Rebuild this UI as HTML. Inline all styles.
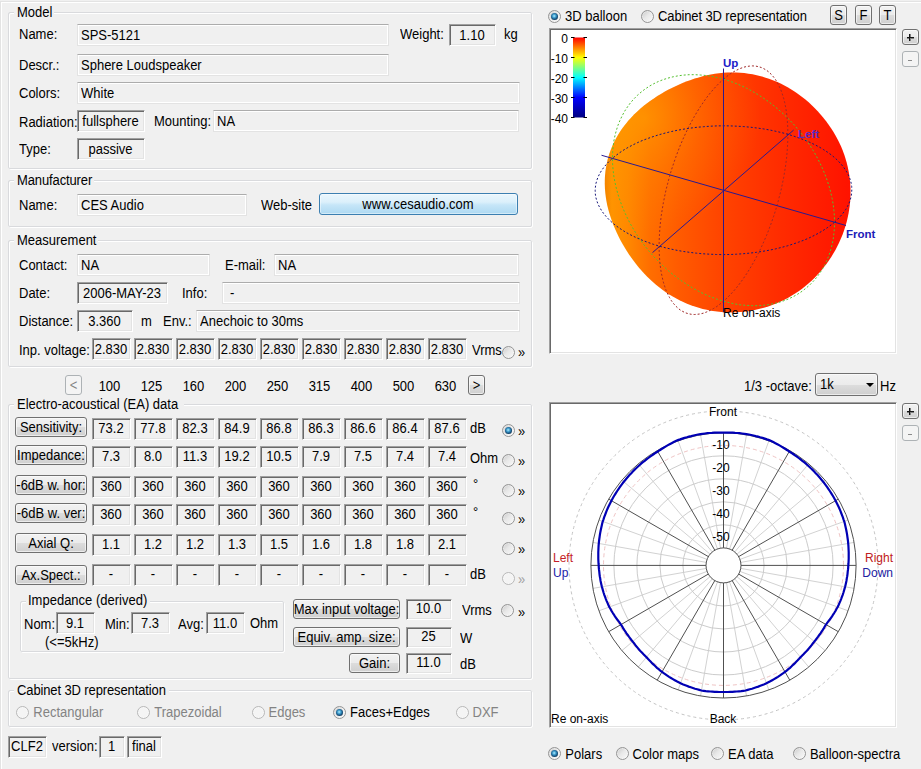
<!DOCTYPE html>
<html><head><meta charset="utf-8"><style>
*{margin:0;padding:0;box-sizing:content-box}
html,body{width:921px;height:769px;overflow:hidden;background:#f0f0f0}
body{position:relative;font-family:'Liberation Sans', sans-serif;font-size:13px}
div{position:absolute}
.t{white-space:nowrap;line-height:16px;transform:scaleY(1.1);transform-origin:0 12px}
.gbw{border:1px solid #fff;border-radius:2px}
.gbg{border:1px solid #d9dadd;border-radius:2px}
.gbl{background:#f0f0f0}
.fl{border-top:1px solid #acacac;border-left:1px solid #e3e3e3;border-right:1px solid #e3e3e3;border-bottom:1px solid #e3e3e3;box-shadow:inset 1px 1px 0 #fff,inset -1px -1px 0 #fff;background:#f0f0f0}
.sk{border-top:1px solid #a0a0a0;border-left:1px solid #a0a0a0;border-right:1px solid #fff;border-bottom:1px solid #fff;box-shadow:inset 1px 1px 0 #696969,inset -1px -1px 0 #e3e3e3;padding:1px;background:#f0f0f0;width:0;height:0}
.btn{border:1px solid #707070;border-radius:3px;background:linear-gradient(#f2f2f2 0%,#ebebeb 50%,#dddddd 50%,#cfcfcf 100%);box-shadow:inset 0 0 0 1px rgba(255,255,255,.6)}
.btn.dis{border-color:#adb2b5;background:#f4f4f4;box-shadow:none}
.rd{width:11px;height:11px;border:1px solid #959595;border-radius:50%;background:linear-gradient(135deg,#c8c8c8 0%,#e8e8e8 45%,#fafafa 100%);box-shadow:inset 0 0 0 1px rgba(255,255,255,.35)}
.rd.rdis{border-color:#b8b8b8;background:#f4f4f4}
.dot{left:2px;top:2px;width:7px;height:7px;border-radius:50%;background:radial-gradient(circle 4.8px at 3.2px 3px,#b8eefc 0,#4aa8d6 1.5px,#1c5f8e 3px,#0b3050 4.2px,#0a2a44 4.8px)}

.web{border:1px solid #3c7fb1;border-radius:3px;background:linear-gradient(#eaf6fd 0%,#dcf0fb 40%,#c6e6f8 55%,#aed9f2 100%);box-shadow:inset 0 0 0 1px rgba(255,255,255,.45)}
.pb{border-top:1px solid #a0a0a0;border-left:1px solid #a0a0a0;border-right:1px solid #fff;border-bottom:1px solid #fff;box-shadow:inset 1px 1px 0 #696969,inset -1px -1px 0 #e3e3e3;background:#fff;padding:1px}
</style></head>
<body>
<div style="left:0;top:1px;width:921px;height:0;border-top:1px solid #e3e3e3"></div>
<div style="left:1px;top:2px;width:920px;height:0;border-top:1px solid #fff"></div>
<div style="left:0;top:1px;width:0;height:768px;border-left:1px solid #e3e3e3"></div>
<div style="left:1px;top:2px;width:0;height:767px;border-left:1px solid #fff"></div>
<div class="gbw" style="left:9px;top:13px;width:522px;height:155px"></div>
<div class="gbg" style="left:8px;top:12px;width:522px;height:155px"></div>
<div class="gbl" style="left:14px;top:4px;width:40px;height:16px"></div>
<div class="t" style="left:17px;top:5px;font-size:13px;color:#000;">Model</div>
<div class="t" style="left:19px;top:27px;font-size:13px;color:#000;">Name:</div>
<div class="fl" style="left:77px;top:24px;width:310px;height:20px"></div>
<div class="t" style="left:81px;top:28px;font-size:13px;color:#000;">SPS-5121</div>
<div class="t" style="left:400px;top:27px;font-size:13px;color:#000;">Weight:</div>
<div class="sk" style="left:449px;top:24px;width:43px;height:18px"></div>
<div class="t" style="left:372.0px;width:200px;text-align:center;top:28px;font-size:13px;color:#000;">1.10</div>
<div class="t" style="left:504px;top:27px;font-size:13px;color:#000;">kg</div>
<div class="t" style="left:19px;top:58px;font-size:13px;color:#000;">Descr.:</div>
<div class="fl" style="left:77px;top:54px;width:310px;height:20px"></div>
<div class="t" style="left:81px;top:58px;font-size:13px;color:#000;">Sphere Loudspeaker</div>
<div class="t" style="left:19px;top:86px;font-size:13px;color:#000;">Colors:</div>
<div class="fl" style="left:77px;top:82px;width:441px;height:20px"></div>
<div class="t" style="left:81px;top:86px;font-size:13px;color:#000;">White</div>
<div class="t" style="left:19px;top:115px;font-size:13px;color:#000;">Radiation:</div>
<div class="sk" style="left:77px;top:110px;width:64px;height:18px"></div>
<div class="t" style="left:10.5px;width:200px;text-align:center;top:114px;font-size:13px;color:#000;">fullsphere</div>
<div class="t" style="left:154px;top:114px;font-size:13px;color:#000;">Mounting:</div>
<div class="fl" style="left:213px;top:110px;width:304px;height:20px"></div>
<div class="t" style="left:217px;top:114px;font-size:13px;color:#000;">NA</div>
<div class="t" style="left:19px;top:142px;font-size:13px;color:#000;">Type:</div>
<div class="sk" style="left:77px;top:138px;width:64px;height:18px"></div>
<div class="t" style="left:10.5px;width:200px;text-align:center;top:142px;font-size:13px;color:#000;">passive</div>
<div class="gbw" style="left:9px;top:181px;width:522px;height:45px"></div>
<div class="gbg" style="left:8px;top:180px;width:522px;height:45px"></div>
<div class="gbl" style="left:14px;top:172px;width:80px;height:16px"></div>
<div class="t" style="left:17px;top:173px;font-size:13px;color:#000;letter-spacing:-0.12px">Manufacturer</div>
<div class="t" style="left:19px;top:198px;font-size:13px;color:#000;">Name:</div>
<div class="fl" style="left:77px;top:194px;width:168px;height:20px"></div>
<div class="t" style="left:81px;top:198px;font-size:13px;color:#000;">CES Audio</div>
<div class="t" style="left:261px;top:198px;font-size:13px;color:#000;">Web-site</div>
<div class="web" style="left:319px;top:193px;width:197px;height:20px"></div>
<div class="t" style="left:318px;width:200px;text-align:center;top:197px;font-size:13px;color:#000;">www.cesaudio.com</div>
<div class="gbw" style="left:9px;top:241px;width:522px;height:125px"></div>
<div class="gbg" style="left:8px;top:240px;width:522px;height:125px"></div>
<div class="gbl" style="left:14px;top:232px;width:84px;height:16px"></div>
<div class="t" style="left:17px;top:233px;font-size:13px;color:#000;">Measurement</div>
<div class="t" style="left:19px;top:258px;font-size:13px;color:#000;">Contact:</div>
<div class="fl" style="left:77px;top:254px;width:131px;height:20px"></div>
<div class="t" style="left:81px;top:258px;font-size:13px;color:#000;">NA</div>
<div class="t" style="left:225px;top:258px;font-size:13px;color:#000;">E-mail:</div>
<div class="fl" style="left:274px;top:254px;width:243px;height:20px"></div>
<div class="t" style="left:278px;top:258px;font-size:13px;color:#000;">NA</div>
<div class="t" style="left:19px;top:286px;font-size:13px;color:#000;">Date:</div>
<div class="sk" style="left:77px;top:282px;width:87px;height:18px"></div>
<div class="t" style="left:22.0px;width:200px;text-align:center;top:286px;font-size:13px;color:#000;">2006-MAY-23</div>
<div class="t" style="left:182px;top:286px;font-size:13px;color:#000;">Info:</div>
<div class="fl" style="left:222px;top:282px;width:296px;height:20px"></div>
<div class="t" style="left:230px;top:286px;font-size:13px;color:#000;">-</div>
<div class="t" style="left:19px;top:314px;font-size:13px;color:#000;">Distance:</div>
<div class="sk" style="left:77px;top:310px;width:52px;height:18px"></div>
<div class="t" style="left:4.5px;width:200px;text-align:center;top:314px;font-size:13px;color:#000;">3.360</div>
<div class="t" style="left:141px;top:314px;font-size:13px;color:#000;">m</div>
<div class="t" style="left:163px;top:314px;font-size:13px;color:#000;">Env.:</div>
<div class="fl" style="left:196px;top:310px;width:322px;height:20px"></div>
<div class="t" style="left:200px;top:314px;font-size:13px;color:#000;">Anechoic to 30ms</div>
<div class="t" style="left:19px;top:343px;font-size:13px;color:#000;">Inp. voltage:</div>
<div class="sk" style="left:92px;top:338px;width:35px;height:18px"></div>
<div class="t" style="left:11.0px;width:200px;text-align:center;top:342px;font-size:13px;color:#000;">2.830</div>
<div class="sk" style="left:134px;top:338px;width:35px;height:18px"></div>
<div class="t" style="left:53.0px;width:200px;text-align:center;top:342px;font-size:13px;color:#000;">2.830</div>
<div class="sk" style="left:176px;top:338px;width:35px;height:18px"></div>
<div class="t" style="left:95.0px;width:200px;text-align:center;top:342px;font-size:13px;color:#000;">2.830</div>
<div class="sk" style="left:218px;top:338px;width:35px;height:18px"></div>
<div class="t" style="left:137.0px;width:200px;text-align:center;top:342px;font-size:13px;color:#000;">2.830</div>
<div class="sk" style="left:260px;top:338px;width:35px;height:18px"></div>
<div class="t" style="left:179.0px;width:200px;text-align:center;top:342px;font-size:13px;color:#000;">2.830</div>
<div class="sk" style="left:302px;top:338px;width:35px;height:18px"></div>
<div class="t" style="left:221.0px;width:200px;text-align:center;top:342px;font-size:13px;color:#000;">2.830</div>
<div class="sk" style="left:344px;top:338px;width:35px;height:18px"></div>
<div class="t" style="left:263.0px;width:200px;text-align:center;top:342px;font-size:13px;color:#000;">2.830</div>
<div class="sk" style="left:386px;top:338px;width:35px;height:18px"></div>
<div class="t" style="left:305.0px;width:200px;text-align:center;top:342px;font-size:13px;color:#000;">2.830</div>
<div class="sk" style="left:428px;top:338px;width:35px;height:18px"></div>
<div class="t" style="left:347.0px;width:200px;text-align:center;top:342px;font-size:13px;color:#000;">2.830</div>
<div class="t" style="left:472px;top:343px;font-size:13px;color:#000;">Vrms</div>
<div class="rd" style="left:501.5px;top:345.5px"></div>
<div class="t" style="left:518px;top:345px;font-size:13px;color:#000;">»</div>
<div class="btn dis" style="left:65px;top:375px;width:15px;height:18px"></div>
<div class="t" style="left:-26.5px;width:200px;text-align:center;top:378px;font-size:13px;color:#838383;">&lt;</div>
<div class="t" style="left:9.5px;width:200px;text-align:center;top:379px;font-size:13px;color:#000;">100</div>
<div class="t" style="left:51.5px;width:200px;text-align:center;top:379px;font-size:13px;color:#000;">125</div>
<div class="t" style="left:93.5px;width:200px;text-align:center;top:379px;font-size:13px;color:#000;">160</div>
<div class="t" style="left:135.5px;width:200px;text-align:center;top:379px;font-size:13px;color:#000;">200</div>
<div class="t" style="left:177.5px;width:200px;text-align:center;top:379px;font-size:13px;color:#000;">250</div>
<div class="t" style="left:219.5px;width:200px;text-align:center;top:379px;font-size:13px;color:#000;">315</div>
<div class="t" style="left:261.5px;width:200px;text-align:center;top:379px;font-size:13px;color:#000;">400</div>
<div class="t" style="left:303.5px;width:200px;text-align:center;top:379px;font-size:13px;color:#000;">500</div>
<div class="t" style="left:345.5px;width:200px;text-align:center;top:379px;font-size:13px;color:#000;">630</div>
<div class="btn" style="left:468px;top:375px;width:15px;height:18px"></div>
<div class="t" style="left:376.5px;width:200px;text-align:center;top:378px;font-size:13px;color:#000;">&gt;</div>
<div class="gbw" style="left:9px;top:405px;width:522px;height:273px"></div>
<div class="gbg" style="left:8px;top:404px;width:522px;height:273px"></div>
<div class="gbl" style="left:14px;top:396px;width:170px;height:16px"></div>
<div class="t" style="left:17px;top:397px;font-size:13px;color:#000;">Electro-acoustical (EA) data</div>
<div class="btn" style="left:15px;top:417px;width:70px;height:18px"></div>
<div class="t" style="left:-49.0px;width:200px;text-align:center;top:420px;font-size:13px;color:#000;">Sensitivity:</div>
<div class="sk" style="left:92px;top:418px;width:35px;height:18px"></div>
<div class="t" style="left:11.0px;width:200px;text-align:center;top:421px;font-size:13px;color:#000;">73.2</div>
<div class="sk" style="left:134px;top:418px;width:35px;height:18px"></div>
<div class="t" style="left:53.0px;width:200px;text-align:center;top:421px;font-size:13px;color:#000;">77.8</div>
<div class="sk" style="left:176px;top:418px;width:35px;height:18px"></div>
<div class="t" style="left:95.0px;width:200px;text-align:center;top:421px;font-size:13px;color:#000;">82.3</div>
<div class="sk" style="left:218px;top:418px;width:35px;height:18px"></div>
<div class="t" style="left:137.0px;width:200px;text-align:center;top:421px;font-size:13px;color:#000;">84.9</div>
<div class="sk" style="left:260px;top:418px;width:35px;height:18px"></div>
<div class="t" style="left:179.0px;width:200px;text-align:center;top:421px;font-size:13px;color:#000;">86.8</div>
<div class="sk" style="left:302px;top:418px;width:35px;height:18px"></div>
<div class="t" style="left:221.0px;width:200px;text-align:center;top:421px;font-size:13px;color:#000;">86.3</div>
<div class="sk" style="left:344px;top:418px;width:35px;height:18px"></div>
<div class="t" style="left:263.0px;width:200px;text-align:center;top:421px;font-size:13px;color:#000;">86.6</div>
<div class="sk" style="left:386px;top:418px;width:35px;height:18px"></div>
<div class="t" style="left:305.0px;width:200px;text-align:center;top:421px;font-size:13px;color:#000;">86.4</div>
<div class="sk" style="left:428px;top:418px;width:35px;height:18px"></div>
<div class="t" style="left:347.0px;width:200px;text-align:center;top:421px;font-size:13px;color:#000;">87.6</div>
<div class="t" style="left:470px;top:421px;font-size:13px;color:#000;">dB</div>
<div class="rd" style="left:501.5px;top:423.75px"><div class="dot"></div></div>
<div class="t" style="left:518px;top:424px;font-size:13px;color:#000;">»</div>
<div class="btn" style="left:15px;top:445px;width:70px;height:18px"></div>
<div class="t" style="left:-49.0px;width:200px;text-align:center;top:448px;font-size:13px;color:#000;">Impedance:</div>
<div class="sk" style="left:92px;top:446px;width:35px;height:18px"></div>
<div class="t" style="left:11.0px;width:200px;text-align:center;top:449px;font-size:13px;color:#000;">7.3</div>
<div class="sk" style="left:134px;top:446px;width:35px;height:18px"></div>
<div class="t" style="left:53.0px;width:200px;text-align:center;top:449px;font-size:13px;color:#000;">8.0</div>
<div class="sk" style="left:176px;top:446px;width:35px;height:18px"></div>
<div class="t" style="left:95.0px;width:200px;text-align:center;top:449px;font-size:13px;color:#000;">11.3</div>
<div class="sk" style="left:218px;top:446px;width:35px;height:18px"></div>
<div class="t" style="left:137.0px;width:200px;text-align:center;top:449px;font-size:13px;color:#000;">19.2</div>
<div class="sk" style="left:260px;top:446px;width:35px;height:18px"></div>
<div class="t" style="left:179.0px;width:200px;text-align:center;top:449px;font-size:13px;color:#000;">10.5</div>
<div class="sk" style="left:302px;top:446px;width:35px;height:18px"></div>
<div class="t" style="left:221.0px;width:200px;text-align:center;top:449px;font-size:13px;color:#000;">7.9</div>
<div class="sk" style="left:344px;top:446px;width:35px;height:18px"></div>
<div class="t" style="left:263.0px;width:200px;text-align:center;top:449px;font-size:13px;color:#000;">7.5</div>
<div class="sk" style="left:386px;top:446px;width:35px;height:18px"></div>
<div class="t" style="left:305.0px;width:200px;text-align:center;top:449px;font-size:13px;color:#000;">7.4</div>
<div class="sk" style="left:428px;top:446px;width:35px;height:18px"></div>
<div class="t" style="left:347.0px;width:200px;text-align:center;top:449px;font-size:13px;color:#000;">7.4</div>
<div class="t" style="left:470px;top:451px;font-size:13px;color:#000;">Ohm</div>
<div class="rd" style="left:501.5px;top:453.75px"></div>
<div class="t" style="left:518px;top:454px;font-size:13px;color:#000;">»</div>
<div class="btn" style="left:15px;top:475px;width:70px;height:18px"></div>
<div class="t" style="left:-49.0px;width:200px;text-align:center;top:478px;font-size:13px;color:#000;">-6dB w. hor:</div>
<div class="sk" style="left:92px;top:476px;width:35px;height:18px"></div>
<div class="t" style="left:11.0px;width:200px;text-align:center;top:479px;font-size:13px;color:#000;">360</div>
<div class="sk" style="left:134px;top:476px;width:35px;height:18px"></div>
<div class="t" style="left:53.0px;width:200px;text-align:center;top:479px;font-size:13px;color:#000;">360</div>
<div class="sk" style="left:176px;top:476px;width:35px;height:18px"></div>
<div class="t" style="left:95.0px;width:200px;text-align:center;top:479px;font-size:13px;color:#000;">360</div>
<div class="sk" style="left:218px;top:476px;width:35px;height:18px"></div>
<div class="t" style="left:137.0px;width:200px;text-align:center;top:479px;font-size:13px;color:#000;">360</div>
<div class="sk" style="left:260px;top:476px;width:35px;height:18px"></div>
<div class="t" style="left:179.0px;width:200px;text-align:center;top:479px;font-size:13px;color:#000;">360</div>
<div class="sk" style="left:302px;top:476px;width:35px;height:18px"></div>
<div class="t" style="left:221.0px;width:200px;text-align:center;top:479px;font-size:13px;color:#000;">360</div>
<div class="sk" style="left:344px;top:476px;width:35px;height:18px"></div>
<div class="t" style="left:263.0px;width:200px;text-align:center;top:479px;font-size:13px;color:#000;">360</div>
<div class="sk" style="left:386px;top:476px;width:35px;height:18px"></div>
<div class="t" style="left:305.0px;width:200px;text-align:center;top:479px;font-size:13px;color:#000;">360</div>
<div class="sk" style="left:428px;top:476px;width:35px;height:18px"></div>
<div class="t" style="left:347.0px;width:200px;text-align:center;top:479px;font-size:13px;color:#000;">360</div>
<div class="t" style="left:473px;top:477px;font-size:13px;color:#000;">°</div>
<div class="rd" style="left:501.5px;top:483.75px"></div>
<div class="t" style="left:518px;top:484px;font-size:13px;color:#000;">»</div>
<div class="btn" style="left:15px;top:503px;width:70px;height:18px"></div>
<div class="t" style="left:-49.0px;width:200px;text-align:center;top:506px;font-size:13px;color:#000;">-6dB w. ver:</div>
<div class="sk" style="left:92px;top:504px;width:35px;height:18px"></div>
<div class="t" style="left:11.0px;width:200px;text-align:center;top:507px;font-size:13px;color:#000;">360</div>
<div class="sk" style="left:134px;top:504px;width:35px;height:18px"></div>
<div class="t" style="left:53.0px;width:200px;text-align:center;top:507px;font-size:13px;color:#000;">360</div>
<div class="sk" style="left:176px;top:504px;width:35px;height:18px"></div>
<div class="t" style="left:95.0px;width:200px;text-align:center;top:507px;font-size:13px;color:#000;">360</div>
<div class="sk" style="left:218px;top:504px;width:35px;height:18px"></div>
<div class="t" style="left:137.0px;width:200px;text-align:center;top:507px;font-size:13px;color:#000;">360</div>
<div class="sk" style="left:260px;top:504px;width:35px;height:18px"></div>
<div class="t" style="left:179.0px;width:200px;text-align:center;top:507px;font-size:13px;color:#000;">360</div>
<div class="sk" style="left:302px;top:504px;width:35px;height:18px"></div>
<div class="t" style="left:221.0px;width:200px;text-align:center;top:507px;font-size:13px;color:#000;">360</div>
<div class="sk" style="left:344px;top:504px;width:35px;height:18px"></div>
<div class="t" style="left:263.0px;width:200px;text-align:center;top:507px;font-size:13px;color:#000;">360</div>
<div class="sk" style="left:386px;top:504px;width:35px;height:18px"></div>
<div class="t" style="left:305.0px;width:200px;text-align:center;top:507px;font-size:13px;color:#000;">360</div>
<div class="sk" style="left:428px;top:504px;width:35px;height:18px"></div>
<div class="t" style="left:347.0px;width:200px;text-align:center;top:507px;font-size:13px;color:#000;">360</div>
<div class="t" style="left:473px;top:505px;font-size:13px;color:#000;">°</div>
<div class="rd" style="left:501.5px;top:511.75px"></div>
<div class="t" style="left:518px;top:512px;font-size:13px;color:#000;">»</div>
<div class="btn" style="left:15px;top:533px;width:70px;height:18px"></div>
<div class="t" style="left:-49.0px;width:200px;text-align:center;top:536px;font-size:13px;color:#000;">Axial Q:</div>
<div class="sk" style="left:92px;top:534px;width:35px;height:18px"></div>
<div class="t" style="left:11.0px;width:200px;text-align:center;top:537px;font-size:13px;color:#000;">1.1</div>
<div class="sk" style="left:134px;top:534px;width:35px;height:18px"></div>
<div class="t" style="left:53.0px;width:200px;text-align:center;top:537px;font-size:13px;color:#000;">1.2</div>
<div class="sk" style="left:176px;top:534px;width:35px;height:18px"></div>
<div class="t" style="left:95.0px;width:200px;text-align:center;top:537px;font-size:13px;color:#000;">1.2</div>
<div class="sk" style="left:218px;top:534px;width:35px;height:18px"></div>
<div class="t" style="left:137.0px;width:200px;text-align:center;top:537px;font-size:13px;color:#000;">1.3</div>
<div class="sk" style="left:260px;top:534px;width:35px;height:18px"></div>
<div class="t" style="left:179.0px;width:200px;text-align:center;top:537px;font-size:13px;color:#000;">1.5</div>
<div class="sk" style="left:302px;top:534px;width:35px;height:18px"></div>
<div class="t" style="left:221.0px;width:200px;text-align:center;top:537px;font-size:13px;color:#000;">1.6</div>
<div class="sk" style="left:344px;top:534px;width:35px;height:18px"></div>
<div class="t" style="left:263.0px;width:200px;text-align:center;top:537px;font-size:13px;color:#000;">1.8</div>
<div class="sk" style="left:386px;top:534px;width:35px;height:18px"></div>
<div class="t" style="left:305.0px;width:200px;text-align:center;top:537px;font-size:13px;color:#000;">1.8</div>
<div class="sk" style="left:428px;top:534px;width:35px;height:18px"></div>
<div class="t" style="left:347.0px;width:200px;text-align:center;top:537px;font-size:13px;color:#000;">2.1</div>
<div class="rd" style="left:501.5px;top:541.75px"></div>
<div class="t" style="left:518px;top:542px;font-size:13px;color:#000;">»</div>
<div class="btn" style="left:15px;top:565px;width:70px;height:18px"></div>
<div class="t" style="left:-49.0px;width:200px;text-align:center;top:568px;font-size:13px;color:#000;">Ax.Spect.:</div>
<div class="sk" style="left:92px;top:564px;width:35px;height:18px"></div>
<div class="t" style="left:11.0px;width:200px;text-align:center;top:567px;font-size:13px;color:#000;">-</div>
<div class="sk" style="left:134px;top:564px;width:35px;height:18px"></div>
<div class="t" style="left:53.0px;width:200px;text-align:center;top:567px;font-size:13px;color:#000;">-</div>
<div class="sk" style="left:176px;top:564px;width:35px;height:18px"></div>
<div class="t" style="left:95.0px;width:200px;text-align:center;top:567px;font-size:13px;color:#000;">-</div>
<div class="sk" style="left:218px;top:564px;width:35px;height:18px"></div>
<div class="t" style="left:137.0px;width:200px;text-align:center;top:567px;font-size:13px;color:#000;">-</div>
<div class="sk" style="left:260px;top:564px;width:35px;height:18px"></div>
<div class="t" style="left:179.0px;width:200px;text-align:center;top:567px;font-size:13px;color:#000;">-</div>
<div class="sk" style="left:302px;top:564px;width:35px;height:18px"></div>
<div class="t" style="left:221.0px;width:200px;text-align:center;top:567px;font-size:13px;color:#000;">-</div>
<div class="sk" style="left:344px;top:564px;width:35px;height:18px"></div>
<div class="t" style="left:263.0px;width:200px;text-align:center;top:567px;font-size:13px;color:#000;">-</div>
<div class="sk" style="left:386px;top:564px;width:35px;height:18px"></div>
<div class="t" style="left:305.0px;width:200px;text-align:center;top:567px;font-size:13px;color:#000;">-</div>
<div class="sk" style="left:428px;top:564px;width:35px;height:18px"></div>
<div class="t" style="left:347.0px;width:200px;text-align:center;top:567px;font-size:13px;color:#000;">-</div>
<div class="t" style="left:470px;top:567px;font-size:13px;color:#000;">dB</div>
<div class="rd rdis" style="left:501.5px;top:571.75px"></div>
<div class="t" style="left:518px;top:572px;font-size:13px;color:#a0a0a0;">»</div>
<div class="gbw" style="left:21px;top:602px;width:262px;height:49px"></div>
<div class="gbg" style="left:20px;top:601px;width:262px;height:49px"></div>
<div class="gbl" style="left:26px;top:593px;width:124px;height:16px"></div>
<div class="t" style="left:28px;top:593px;font-size:13px;color:#000;">Impedance (derived)</div>
<div class="t" style="left:24px;top:617px;font-size:13px;color:#000;">Nom:</div>
<div class="sk" style="left:56px;top:612px;width:35px;height:18px"></div>
<div class="t" style="left:-25.0px;width:200px;text-align:center;top:616px;font-size:13px;color:#000;">9.1</div>
<div class="t" style="left:45px;top:635px;font-size:13px;color:#000;">(&lt;=5kHz)</div>
<div class="t" style="left:105px;top:617px;font-size:13px;color:#000;">Min:</div>
<div class="sk" style="left:131px;top:612px;width:35px;height:18px"></div>
<div class="t" style="left:50.0px;width:200px;text-align:center;top:616px;font-size:13px;color:#000;">7.3</div>
<div class="t" style="left:178px;top:617px;font-size:13px;color:#000;">Avg:</div>
<div class="sk" style="left:206px;top:612px;width:35px;height:18px"></div>
<div class="t" style="left:125.0px;width:200px;text-align:center;top:616px;font-size:13px;color:#000;">11.0</div>
<div class="t" style="left:250px;top:616px;font-size:13px;color:#000;">Ohm</div>
<div class="btn" style="left:293px;top:599px;width:105px;height:18px"></div>
<div class="t" style="left:246.5px;width:200px;text-align:center;top:602px;font-size:13px;color:#000;">Max input voltage:</div>
<div class="sk" style="left:406px;top:599px;width:42px;height:17px"></div>
<div class="t" style="left:328.5px;width:200px;text-align:center;top:601px;font-size:13px;color:#000;">10.0</div>
<div class="t" style="left:462px;top:603px;font-size:13px;color:#000;">Vrms</div>
<div class="rd" style="left:501.0px;top:603.5px"></div>
<div class="t" style="left:518px;top:605px;font-size:13px;color:#000;">»</div>
<div class="btn" style="left:293px;top:627px;width:105px;height:18px"></div>
<div class="t" style="left:246.5px;width:200px;text-align:center;top:630px;font-size:13px;color:#000;">Equiv. amp. size:</div>
<div class="sk" style="left:406px;top:627px;width:42px;height:17px"></div>
<div class="t" style="left:328.5px;width:200px;text-align:center;top:629px;font-size:13px;color:#000;">25</div>
<div class="t" style="left:460px;top:631px;font-size:13px;color:#000;">W</div>
<div class="btn" style="left:349px;top:653px;width:49px;height:18px"></div>
<div class="t" style="left:274.5px;width:200px;text-align:center;top:656px;font-size:13px;color:#000;">Gain:</div>
<div class="sk" style="left:406px;top:653px;width:42px;height:17px"></div>
<div class="t" style="left:328.5px;width:200px;text-align:center;top:655px;font-size:13px;color:#000;">11.0</div>
<div class="t" style="left:460px;top:657px;font-size:13px;color:#000;">dB</div>
<div class="gbw" style="left:9px;top:691px;width:522px;height:35px"></div>
<div class="gbg" style="left:8px;top:690px;width:522px;height:35px"></div>
<div class="gbl" style="left:14px;top:682px;width:155px;height:16px"></div>
<div class="t" style="left:17px;top:683px;font-size:13px;color:#000;letter-spacing:-0.12px">Cabinet 3D representation</div>
<div class="rd rdis" style="left:16.3px;top:705.5px"></div>
<div class="t" style="left:33.3px;top:705px;font-size:13px;color:#838383;">Rectangular</div>
<div class="rd rdis" style="left:137.3px;top:705.5px"></div>
<div class="t" style="left:154.3px;top:705px;font-size:13px;color:#838383;">Trapezoidal</div>
<div class="rd rdis" style="left:251.5px;top:705.5px"></div>
<div class="t" style="left:268.5px;top:705px;font-size:13px;color:#838383;">Edges</div>
<div class="rd" style="left:333.0px;top:705.5px"><div class="dot"></div></div>
<div class="t" style="left:350.0px;top:705px;font-size:13px;color:#000;">Faces+Edges</div>
<div class="rd rdis" style="left:455.5px;top:705.5px"></div>
<div class="t" style="left:472.5px;top:705px;font-size:13px;color:#838383;">DXF</div>
<div class="sk" style="left:8px;top:736px;width:35px;height:18px"></div>
<div class="t" style="left:-73.0px;width:200px;text-align:center;top:739px;font-size:13px;color:#000;">CLF2</div>
<div class="t" style="left:52px;top:739px;font-size:13px;color:#000;">version:</div>
<div class="sk" style="left:99px;top:736px;width:22px;height:18px"></div>
<div class="t" style="left:11.5px;width:200px;text-align:center;top:739px;font-size:13px;color:#000;">1</div>
<div class="sk" style="left:127px;top:736px;width:31px;height:18px"></div>
<div class="t" style="left:44.0px;width:200px;text-align:center;top:739px;font-size:13px;color:#000;">final</div>
<div class="rd" style="left:548.3px;top:9.5px"><div class="dot"></div></div>
<div class="t" style="left:565px;top:9px;font-size:13px;color:#000;">3D balloon</div>
<div class="rd" style="left:641.0px;top:9.5px"></div>
<div class="t" style="left:658px;top:9px;font-size:13px;color:#000;letter-spacing:-0.12px">Cabinet 3D representation</div>
<div class="btn" style="left:830px;top:5px;width:15px;height:18px"></div>
<div class="t" style="left:738.5px;width:200px;text-align:center;top:8px;font-size:13px;color:#000;">S</div>
<div class="btn" style="left:855px;top:5px;width:15px;height:18px"></div>
<div class="t" style="left:763.5px;width:200px;text-align:center;top:8px;font-size:13px;color:#000;">F</div>
<div class="btn" style="left:879px;top:5px;width:15px;height:18px"></div>
<div class="t" style="left:787.5px;width:200px;text-align:center;top:8px;font-size:13px;color:#000;">T</div>
<div class="pb" style="left:549px;top:28px;width:344px;height:322px"></div>
<div class="btn" style="left:902px;top:29px;width:15px;height:14px"></div>
<div style="left:907px;top:37px;width:7px;height:2px;background:#808080"></div><div style="left:909px;top:34px;width:2px;height:7px;background:#808080"></div><div style="left:907px;top:37px;width:7px;height:1px;background:#151515"></div><div style="left:909px;top:34px;width:1px;height:7px;background:#151515"></div>
<div class="btn dis" style="left:902px;top:51px;width:15px;height:14px"></div>
<div style="left:908px;top:60px;width:4px;height:1px;background:#8a8a8a"></div>
<div class="t" style="left:744px;top:379px;font-size:13px;color:#000;">1/3 -octave:</div>
<div class="btn" style="left:815px;top:373px;width:61px;height:21px"></div>
<div class="t" style="left:820px;top:377px;font-size:13px;color:#000;">1k</div>
<div style="left:866px;top:383px;width:0;height:0;border-left:4px solid transparent;border-right:4px solid transparent;border-top:4px solid #000"></div>
<div class="t" style="left:880px;top:379px;font-size:13px;color:#000;">Hz</div>
<div class="pb" style="left:549px;top:402px;width:344px;height:322px"></div>
<div class="btn" style="left:902px;top:403px;width:15px;height:14px"></div>
<div style="left:907px;top:411px;width:7px;height:2px;background:#808080"></div><div style="left:909px;top:408px;width:2px;height:7px;background:#808080"></div><div style="left:907px;top:411px;width:7px;height:1px;background:#151515"></div><div style="left:909px;top:408px;width:1px;height:7px;background:#151515"></div>
<div class="btn dis" style="left:902px;top:425px;width:15px;height:14px"></div>
<div style="left:908px;top:434px;width:4px;height:1px;background:#8a8a8a"></div>
<div class="rd" style="left:548.3px;top:747.0px"><div class="dot"></div></div>
<div class="t" style="left:565.3px;top:747px;font-size:13px;color:#000;">Polars</div>
<div class="rd" style="left:615.5px;top:747.0px"></div>
<div class="t" style="left:632.5px;top:747px;font-size:13px;color:#000;">Color maps</div>
<div class="rd" style="left:711.0px;top:747.0px"></div>
<div class="t" style="left:728.0px;top:747px;font-size:13px;color:#000;">EA data</div>
<div class="rd" style="left:792.9px;top:747.0px"></div>
<div class="t" style="left:809.9px;top:747px;font-size:13px;color:#000;">Balloon-spectra</div>
<svg style="position:absolute;left:551px;top:30px" width="344" height="322" viewBox="551 30 344 322">
<defs><linearGradient id="bg" gradientUnits="userSpaceOnUse" x1="604" y1="0" x2="851" y2="0"><stop offset="0.000" stop-color="#f08000"/><stop offset="0.032" stop-color="#ff9400"/><stop offset="0.097" stop-color="#ff8800"/><stop offset="0.186" stop-color="#ff6e00"/><stop offset="0.308" stop-color="#ff5a00"/><stop offset="0.478" stop-color="#ff4400"/><stop offset="0.713" stop-color="#ff2c00"/><stop offset="0.915" stop-color="#ff1a00"/><stop offset="1.000" stop-color="#ff1200"/></linearGradient>
<radialGradient id="hl" gradientUnits="userSpaceOnUse" cx="645" cy="118" r="115"><stop offset="0" stop-color="#ffa400" stop-opacity="0.6"/><stop offset="0.5" stop-color="#ff9800" stop-opacity="0.25"/><stop offset="1" stop-color="#ff9000" stop-opacity="0"/></radialGradient>
<linearGradient id="cb" x1="0" y1="0" x2="0" y2="1">
<stop offset="0" stop-color="#ff0000"/><stop offset="0.125" stop-color="#ff8000"/><stop offset="0.25" stop-color="#ffff00"/>
<stop offset="0.375" stop-color="#80ff80"/><stop offset="0.5" stop-color="#00ffff"/><stop offset="0.625" stop-color="#0080ff"/>
<stop offset="0.75" stop-color="#0000ff"/><stop offset="1" stop-color="#000080"/></linearGradient></defs>
<path d="M727.50,72.58 L731.69,72.47 L735.89,72.52 L740.09,72.73 L744.28,73.10 L748.46,73.63 L752.62,74.33 L756.75,75.19 L760.85,76.21 L764.90,77.38 L768.91,78.72 L772.87,80.20 L776.77,81.83 L780.61,83.61 L784.38,85.52 L788.09,87.56 L791.71,89.74 L795.27,92.03 L798.74,94.45 L802.13,96.98 L805.43,99.62 L808.65,102.37 L811.78,105.23 L814.81,108.18 L817.75,111.24 L820.59,114.39 L823.33,117.63 L825.97,120.96 L828.49,124.38 L830.90,127.89 L833.19,131.48 L835.36,135.15 L837.40,138.90 L839.31,142.72 L841.09,146.61 L842.72,150.56 L844.20,154.58 L845.54,158.65 L846.72,162.77 L847.75,166.94 L848.62,171.14 L849.33,175.38 L849.88,179.64 L850.27,183.92 L850.49,188.21 L850.55,192.50 L850.45,196.79 L850.19,201.08 L849.77,205.35 L849.20,209.60 L848.47,213.83 L847.59,218.03 L846.56,222.19 L845.39,226.30 L844.07,230.38 L842.61,234.40 L841.02,238.36 L839.29,242.27 L837.43,246.12 L835.44,249.89 L833.33,253.60 L831.09,257.23 L828.72,260.78 L826.24,264.24 L823.64,267.62 L820.93,270.90 L818.11,274.08 L815.17,277.17 L812.14,280.14 L808.99,283.01 L805.76,285.76 L802.42,288.39 L799.00,290.91 L795.48,293.29 L791.89,295.55 L788.22,297.67 L784.48,299.66 L780.67,301.51 L776.79,303.22 L772.87,304.78 L768.89,306.21 L764.86,307.49 L760.80,308.62 L756.70,309.61 L752.57,310.45 L748.42,311.14 L744.25,311.68 L740.07,312.08 L735.88,312.32 L731.69,312.42 L727.50,312.36 L723.32,312.16 L719.16,311.81 L715.01,311.30 L710.89,310.65 L706.81,309.86 L702.76,308.91 L698.75,307.83 L694.78,306.59 L690.87,305.22 L687.02,303.71 L683.23,302.06 L679.51,300.28 L675.86,298.37 L672.29,296.33 L668.80,294.18 L665.38,291.91 L662.05,289.53 L658.81,287.04 L655.66,284.46 L652.59,281.78 L649.61,279.01 L646.72,276.15 L643.91,273.22 L641.20,270.21 L638.56,267.13 L636.02,263.98 L633.55,260.76 L631.17,257.48 L628.86,254.14 L626.64,250.73 L624.50,247.27 L622.44,243.74 L620.47,240.15 L618.58,236.51 L616.79,232.80 L615.09,229.03 L613.49,225.19 L612.00,221.30 L610.62,217.34 L609.37,213.33 L608.25,209.26 L607.27,205.14 L606.44,200.97 L605.77,196.75 L605.26,192.50 L604.93,188.22 L604.79,183.92 L604.83,179.61 L605.07,175.29 L605.50,170.99 L606.14,166.70 L606.98,162.45 L608.02,158.24 L609.27,154.08 L610.71,149.99 L612.34,145.97 L614.16,142.04 L616.16,138.20 L618.33,134.45 L620.66,130.82 L623.15,127.29 L625.77,123.88 L628.52,120.59 L631.39,117.41 L634.36,114.35 L637.44,111.41 L640.60,108.59 L643.85,105.87 L647.16,103.27 L650.54,100.78 L653.98,98.40 L657.47,96.11 L661.01,93.93 L664.60,91.84 L668.23,89.84 L671.91,87.94 L675.62,86.14 L679.38,84.42 L683.18,82.81 L687.02,81.29 L690.91,79.88 L694.83,78.57 L698.80,77.38 L702.80,76.30 L706.84,75.34 L710.92,74.51 L715.03,73.81 L719.16,73.26 L723.32,72.84Z" fill="url(#bg)"/>
<path d="M727.50,72.58 L731.69,72.47 L735.89,72.52 L740.09,72.73 L744.28,73.10 L748.46,73.63 L752.62,74.33 L756.75,75.19 L760.85,76.21 L764.90,77.38 L768.91,78.72 L772.87,80.20 L776.77,81.83 L780.61,83.61 L784.38,85.52 L788.09,87.56 L791.71,89.74 L795.27,92.03 L798.74,94.45 L802.13,96.98 L805.43,99.62 L808.65,102.37 L811.78,105.23 L814.81,108.18 L817.75,111.24 L820.59,114.39 L823.33,117.63 L825.97,120.96 L828.49,124.38 L830.90,127.89 L833.19,131.48 L835.36,135.15 L837.40,138.90 L839.31,142.72 L841.09,146.61 L842.72,150.56 L844.20,154.58 L845.54,158.65 L846.72,162.77 L847.75,166.94 L848.62,171.14 L849.33,175.38 L849.88,179.64 L850.27,183.92 L850.49,188.21 L850.55,192.50 L850.45,196.79 L850.19,201.08 L849.77,205.35 L849.20,209.60 L848.47,213.83 L847.59,218.03 L846.56,222.19 L845.39,226.30 L844.07,230.38 L842.61,234.40 L841.02,238.36 L839.29,242.27 L837.43,246.12 L835.44,249.89 L833.33,253.60 L831.09,257.23 L828.72,260.78 L826.24,264.24 L823.64,267.62 L820.93,270.90 L818.11,274.08 L815.17,277.17 L812.14,280.14 L808.99,283.01 L805.76,285.76 L802.42,288.39 L799.00,290.91 L795.48,293.29 L791.89,295.55 L788.22,297.67 L784.48,299.66 L780.67,301.51 L776.79,303.22 L772.87,304.78 L768.89,306.21 L764.86,307.49 L760.80,308.62 L756.70,309.61 L752.57,310.45 L748.42,311.14 L744.25,311.68 L740.07,312.08 L735.88,312.32 L731.69,312.42 L727.50,312.36 L723.32,312.16 L719.16,311.81 L715.01,311.30 L710.89,310.65 L706.81,309.86 L702.76,308.91 L698.75,307.83 L694.78,306.59 L690.87,305.22 L687.02,303.71 L683.23,302.06 L679.51,300.28 L675.86,298.37 L672.29,296.33 L668.80,294.18 L665.38,291.91 L662.05,289.53 L658.81,287.04 L655.66,284.46 L652.59,281.78 L649.61,279.01 L646.72,276.15 L643.91,273.22 L641.20,270.21 L638.56,267.13 L636.02,263.98 L633.55,260.76 L631.17,257.48 L628.86,254.14 L626.64,250.73 L624.50,247.27 L622.44,243.74 L620.47,240.15 L618.58,236.51 L616.79,232.80 L615.09,229.03 L613.49,225.19 L612.00,221.30 L610.62,217.34 L609.37,213.33 L608.25,209.26 L607.27,205.14 L606.44,200.97 L605.77,196.75 L605.26,192.50 L604.93,188.22 L604.79,183.92 L604.83,179.61 L605.07,175.29 L605.50,170.99 L606.14,166.70 L606.98,162.45 L608.02,158.24 L609.27,154.08 L610.71,149.99 L612.34,145.97 L614.16,142.04 L616.16,138.20 L618.33,134.45 L620.66,130.82 L623.15,127.29 L625.77,123.88 L628.52,120.59 L631.39,117.41 L634.36,114.35 L637.44,111.41 L640.60,108.59 L643.85,105.87 L647.16,103.27 L650.54,100.78 L653.98,98.40 L657.47,96.11 L661.01,93.93 L664.60,91.84 L668.23,89.84 L671.91,87.94 L675.62,86.14 L679.38,84.42 L683.18,82.81 L687.02,81.29 L690.91,79.88 L694.83,78.57 L698.80,77.38 L702.80,76.30 L706.84,75.34 L710.92,74.51 L715.03,73.81 L719.16,73.26 L723.32,72.84Z" fill="url(#hl)"/>
<rect x="573" y="37.5" width="12" height="80" fill="url(#cb)"/>
<line x1="571" y1="37.5" x2="574.5" y2="37.5" stroke="#000" stroke-width="1"/>
<line x1="583.5" y1="37.5" x2="587" y2="37.5" stroke="#000" stroke-width="1"/>
<line x1="571" y1="57.5" x2="574.5" y2="57.5" stroke="#000" stroke-width="1"/>
<line x1="583.5" y1="57.5" x2="587" y2="57.5" stroke="#000" stroke-width="1"/>
<line x1="571" y1="77.5" x2="574.5" y2="77.5" stroke="#000" stroke-width="1"/>
<line x1="583.5" y1="77.5" x2="587" y2="77.5" stroke="#000" stroke-width="1"/>
<line x1="571" y1="97.5" x2="574.5" y2="97.5" stroke="#000" stroke-width="1"/>
<line x1="583.5" y1="97.5" x2="587" y2="97.5" stroke="#000" stroke-width="1"/>
<line x1="571" y1="117.5" x2="574.5" y2="117.5" stroke="#000" stroke-width="1"/>
<line x1="583.5" y1="117.5" x2="587" y2="117.5" stroke="#000" stroke-width="1"/>
<path d="M723.5,79.2 L729.3,81.0 L735.1,83.1 L740.9,85.5 L746.6,88.2 L752.2,91.2 L757.8,94.5 L763.3,98.0 L768.7,101.8 L773.9,105.8 L779.0,110.0 L784.0,114.5 L788.8,119.2 L793.4,124.0 L797.8,129.1 L802.0,134.3 L806.0,139.7 L809.8,145.2 L813.3,150.8 L816.6,156.5 L819.6,162.4 L822.4,168.3 L824.9,174.2 L827.1,180.2 L829.1,186.3 L830.7,192.3 L832.1,198.4 L833.2,204.4 L833.9,210.4 L834.4,216.3 L834.5,222.2 L834.4,227.9 L833.9,233.6 L833.2,239.1 L832.1,244.5 L830.7,249.8 L829.1,254.9 L827.1,259.8 L824.9,264.5 L822.4,269.1 L819.6,273.4 L816.6,277.5 L813.3,281.3 L809.8,284.9 L806.0,288.2 L802.0,291.3 L797.8,294.1 L793.4,296.6 L788.8,298.8 L784.0,300.7 L779.0,302.3 L773.9,303.6 L768.7,304.6 L763.3,305.3 L757.8,305.7 L752.2,305.7 L746.6,305.4 L740.9,304.9 L735.1,304.0 L729.3,302.7 L723.5,301.2 L717.7,299.4 L711.9,297.3 L706.1,294.9 L700.4,292.2 L694.8,289.2 L689.2,285.9 L683.7,282.4 L678.3,278.6 L673.1,274.6 L668.0,270.4 L663.0,265.9 L658.2,261.2 L653.6,256.4 L649.2,251.3 L645.0,246.1 L641.0,240.7 L637.2,235.2 L633.7,229.6 L630.4,223.9 L627.4,218.0 L624.6,212.1 L622.1,206.2 L619.9,200.2 L617.9,194.1 L616.3,188.1 L614.9,182.0 L613.8,176.0 L613.1,170.0 L612.6,164.1 L612.5,158.2 L612.6,152.5 L613.1,146.8 L613.8,141.3 L614.9,135.9 L616.3,130.6 L617.9,125.5 L619.9,120.6 L622.1,115.9 L624.6,111.3 L627.4,107.0 L630.4,102.9 L633.7,99.1 L637.2,95.5 L641.0,92.2 L645.0,89.1 L649.2,86.3 L653.6,83.8 L658.2,81.6 L663.0,79.7 L668.0,78.1 L673.1,76.8 L678.3,75.8 L683.7,75.1 L689.2,74.7 L694.8,74.7 L700.4,75.0 L706.1,75.5 L711.9,76.4 L717.7,77.7 L723.5,79.2Z" fill="none" stroke="#55c030" stroke-width="1" stroke-dasharray="2,2"/>
<path d="M723.5,79.2 L726.9,76.4 L730.2,73.9 L733.6,71.8 L736.9,70.0 L740.2,68.5 L743.4,67.3 L746.6,66.5 L749.7,66.1 L752.7,65.9 L755.7,66.1 L758.6,66.7 L761.3,67.5 L764.0,68.8 L766.6,70.3 L769.0,72.2 L771.3,74.4 L773.5,76.9 L775.6,79.7 L777.5,82.9 L779.2,86.3 L780.9,90.0 L782.3,94.0 L783.6,98.2 L784.7,102.8 L785.7,107.5 L786.5,112.5 L787.1,117.6 L787.5,123.0 L787.8,128.6 L787.9,134.3 L787.8,140.2 L787.5,146.2 L787.1,152.4 L786.5,158.6 L785.7,165.0 L784.7,171.4 L783.6,177.8 L782.3,184.3 L780.9,190.8 L779.2,197.3 L777.5,203.8 L775.6,210.3 L773.5,216.6 L771.3,223.0 L769.0,229.2 L766.6,235.3 L764.0,241.3 L761.3,247.2 L758.6,252.9 L755.7,258.4 L752.7,263.8 L749.7,268.9 L746.6,273.8 L743.4,278.5 L740.2,283.0 L736.9,287.2 L733.6,291.1 L730.2,294.8 L726.9,298.1 L723.5,301.2 L720.1,304.0 L716.8,306.5 L713.4,308.6 L710.1,310.4 L706.8,311.9 L703.6,313.1 L700.4,313.9 L697.3,314.3 L694.3,314.5 L691.3,314.3 L688.4,313.7 L685.7,312.9 L683.0,311.6 L680.4,310.1 L678.0,308.2 L675.7,306.0 L673.5,303.5 L671.4,300.7 L669.5,297.5 L667.8,294.1 L666.1,290.4 L664.7,286.4 L663.4,282.2 L662.3,277.6 L661.3,272.9 L660.5,267.9 L659.9,262.8 L659.5,257.4 L659.2,251.8 L659.1,246.1 L659.2,240.2 L659.5,234.2 L659.9,228.0 L660.5,221.8 L661.3,215.4 L662.3,209.0 L663.4,202.6 L664.7,196.1 L666.1,189.6 L667.8,183.1 L669.5,176.6 L671.4,170.1 L673.5,163.8 L675.7,157.4 L678.0,151.2 L680.4,145.1 L683.0,139.1 L685.7,133.2 L688.4,127.5 L691.3,122.0 L694.3,116.6 L697.3,111.5 L700.4,106.6 L703.6,101.9 L706.8,97.4 L710.1,93.2 L713.4,89.3 L716.8,85.6 L720.1,82.3 L723.5,79.2Z" fill="none" stroke="#a02828" stroke-width="1" stroke-dasharray="2,2"/>
<path d="M834.5,222.2 L837.7,219.2 L840.6,216.1 L843.2,213.0 L845.5,209.8 L847.4,206.6 L849.0,203.3 L850.2,200.0 L851.1,196.7 L851.6,193.3 L851.8,189.9 L851.7,186.6 L851.2,183.2 L850.3,179.9 L849.1,176.6 L847.5,173.3 L845.6,170.1 L843.4,166.9 L840.8,163.8 L837.9,160.7 L834.8,157.8 L831.3,154.9 L827.5,152.2 L823.4,149.5 L819.0,146.9 L814.4,144.5 L809.5,142.2 L804.4,140.0 L799.1,138.0 L793.6,136.1 L787.9,134.3 L782.0,132.7 L775.9,131.3 L769.7,130.0 L763.4,128.9 L756.9,128.0 L750.4,127.2 L743.8,126.6 L737.1,126.2 L730.4,125.9 L723.7,125.8 L717.0,125.9 L710.3,126.2 L703.7,126.7 L697.0,127.3 L690.5,128.1 L684.1,129.1 L677.7,130.2 L671.5,131.5 L665.4,133.0 L659.5,134.6 L653.8,136.4 L648.3,138.3 L642.9,140.3 L637.8,142.5 L632.9,144.9 L628.3,147.3 L623.9,149.9 L619.8,152.6 L616.0,155.4 L612.5,158.2 L609.3,161.2 L606.4,164.3 L603.8,167.4 L601.5,170.6 L599.6,173.8 L598.0,177.1 L596.8,180.4 L595.9,183.7 L595.4,187.1 L595.2,190.5 L595.3,193.8 L595.8,197.2 L596.7,200.5 L597.9,203.8 L599.5,207.1 L601.4,210.3 L603.6,213.5 L606.2,216.6 L609.1,219.7 L612.2,222.6 L615.7,225.5 L619.5,228.2 L623.6,230.9 L628.0,233.5 L632.6,235.9 L637.5,238.2 L642.6,240.4 L647.9,242.4 L653.4,244.3 L659.1,246.1 L665.0,247.7 L671.1,249.1 L677.3,250.4 L683.6,251.5 L690.1,252.4 L696.6,253.2 L703.2,253.8 L709.9,254.2 L716.6,254.5 L723.3,254.6 L730.0,254.5 L736.7,254.2 L743.3,253.7 L750.0,253.1 L756.5,252.3 L762.9,251.3 L769.3,250.2 L775.5,248.9 L781.6,247.4 L787.5,245.8 L793.2,244.0 L798.7,242.1 L804.1,240.1 L809.2,237.9 L814.1,235.5 L818.7,233.1 L823.1,230.5 L827.2,227.8 L831.0,225.0 L834.5,222.2Z" fill="none" stroke="#18187a" stroke-width="1" stroke-dasharray="2,2"/>
<line x1="723.5" y1="68.5" x2="723.5" y2="312.2" stroke="#2a1a90" stroke-width="1"/>
<line x1="601.5" y1="155.25" x2="846" y2="225.5" stroke="#2a1a90" stroke-width="1"/>
<line x1="652.5" y1="252.6" x2="793.6" y2="130.1" stroke="#2a1a90" stroke-width="1"/>
</svg>
<svg style="position:absolute;left:551px;top:404px" width="344" height="322" viewBox="551 404 344 322">
<circle cx="723.5" cy="565.4" r="154.5" fill="none" stroke="#c4c4c4" stroke-width="1" stroke-dasharray="3,3"/>
<line x1="726.5" y1="548.2" x2="746.5" y2="434.8" stroke="#d2d2d2" stroke-width="1"/>
<line x1="729.5" y1="549.0" x2="768.9" y2="440.8" stroke="#d2d2d2" stroke-width="1"/>
<line x1="734.7" y1="552.0" x2="808.7" y2="463.8" stroke="#d2d2d2" stroke-width="1"/>
<line x1="736.9" y1="554.2" x2="825.1" y2="480.2" stroke="#d2d2d2" stroke-width="1"/>
<line x1="739.9" y1="559.4" x2="848.1" y2="520.0" stroke="#d2d2d2" stroke-width="1"/>
<line x1="740.7" y1="562.4" x2="854.1" y2="542.4" stroke="#d2d2d2" stroke-width="1"/>
<line x1="740.7" y1="568.4" x2="854.1" y2="588.4" stroke="#d2d2d2" stroke-width="1"/>
<line x1="739.9" y1="571.4" x2="848.1" y2="610.8" stroke="#d2d2d2" stroke-width="1"/>
<line x1="736.9" y1="576.6" x2="825.1" y2="650.6" stroke="#d2d2d2" stroke-width="1"/>
<line x1="734.7" y1="578.8" x2="808.7" y2="667.0" stroke="#d2d2d2" stroke-width="1"/>
<line x1="729.5" y1="581.8" x2="768.9" y2="690.0" stroke="#d2d2d2" stroke-width="1"/>
<line x1="726.5" y1="582.6" x2="746.5" y2="696.0" stroke="#d2d2d2" stroke-width="1"/>
<line x1="720.5" y1="582.6" x2="700.5" y2="696.0" stroke="#d2d2d2" stroke-width="1"/>
<line x1="717.5" y1="581.8" x2="678.1" y2="690.0" stroke="#d2d2d2" stroke-width="1"/>
<line x1="712.3" y1="578.8" x2="638.3" y2="667.0" stroke="#d2d2d2" stroke-width="1"/>
<line x1="710.1" y1="576.6" x2="621.9" y2="650.6" stroke="#d2d2d2" stroke-width="1"/>
<line x1="707.1" y1="571.4" x2="598.9" y2="610.8" stroke="#d2d2d2" stroke-width="1"/>
<line x1="706.3" y1="568.4" x2="592.9" y2="588.4" stroke="#d2d2d2" stroke-width="1"/>
<line x1="706.3" y1="562.4" x2="592.9" y2="542.4" stroke="#d2d2d2" stroke-width="1"/>
<line x1="707.1" y1="559.4" x2="598.9" y2="520.0" stroke="#d2d2d2" stroke-width="1"/>
<line x1="710.1" y1="554.2" x2="621.9" y2="480.2" stroke="#d2d2d2" stroke-width="1"/>
<line x1="712.3" y1="552.0" x2="638.3" y2="463.8" stroke="#d2d2d2" stroke-width="1"/>
<line x1="717.5" y1="549.0" x2="678.1" y2="440.8" stroke="#d2d2d2" stroke-width="1"/>
<line x1="720.5" y1="548.2" x2="700.5" y2="434.8" stroke="#d2d2d2" stroke-width="1"/>
<circle cx="723.5" cy="565.4" r="109.6" fill="none" stroke="#cccccc" stroke-width="1"/>
<circle cx="723.5" cy="565.4" r="86.6" fill="none" stroke="#cccccc" stroke-width="1"/>
<circle cx="723.5" cy="565.4" r="63.6" fill="none" stroke="#cccccc" stroke-width="1"/>
<circle cx="723.5" cy="565.4" r="40.6" fill="none" stroke="#cccccc" stroke-width="1"/>
<circle cx="723.5" cy="565.4" r="120" fill="none" stroke="#efc4c4" stroke-width="1" stroke-dasharray="4,3"/>
<line x1="723.5" y1="547.9" x2="723.5" y2="432.8" stroke="#505050" stroke-width="1"/>
<line x1="732.2" y1="550.2" x2="789.8" y2="450.6" stroke="#505050" stroke-width="1"/>
<line x1="738.7" y1="556.6" x2="838.3" y2="499.1" stroke="#505050" stroke-width="1"/>
<line x1="741.0" y1="565.4" x2="856.1" y2="565.4" stroke="#505050" stroke-width="1"/>
<line x1="738.7" y1="574.1" x2="838.3" y2="631.7" stroke="#505050" stroke-width="1"/>
<line x1="732.2" y1="580.6" x2="789.8" y2="680.2" stroke="#505050" stroke-width="1"/>
<line x1="723.5" y1="582.9" x2="723.5" y2="698.0" stroke="#505050" stroke-width="1"/>
<line x1="714.8" y1="580.6" x2="657.2" y2="680.2" stroke="#505050" stroke-width="1"/>
<line x1="708.3" y1="574.1" x2="608.7" y2="631.7" stroke="#505050" stroke-width="1"/>
<line x1="706.0" y1="565.4" x2="590.9" y2="565.4" stroke="#505050" stroke-width="1"/>
<line x1="708.3" y1="556.6" x2="608.7" y2="499.1" stroke="#505050" stroke-width="1"/>
<line x1="714.8" y1="550.2" x2="657.2" y2="450.6" stroke="#505050" stroke-width="1"/>
<circle cx="723.5" cy="565.4" r="132.6" fill="none" stroke="#505050" stroke-width="1"/>
<circle cx="723.5" cy="565.4" r="17.5" fill="#fff" stroke="#505050" stroke-width="1"/>
<path d="M723.5,432.6 L725.8,432.6 L728.1,432.6 L730.5,432.6 L732.8,432.7 L735.1,432.9 L737.4,433.0 L739.7,433.2 L742.0,433.5 L744.3,433.8 L746.6,434.1 L748.9,434.5 L751.2,435.0 L753.5,435.5 L755.7,436.1 L758.0,436.6 L760.2,437.3 L762.5,437.9 L764.7,438.6 L766.9,439.4 L769.1,440.1 L771.2,441.1 L773.3,442.1 L775.4,443.2 L777.4,444.3 L779.5,445.4 L781.5,446.6 L783.4,447.8 L785.4,449.0 L787.3,450.2 L789.2,451.5 L791.2,452.7 L793.1,454.0 L795.0,455.3 L796.9,456.6 L798.7,458.0 L800.5,459.4 L802.3,460.8 L804.1,462.2 L805.9,463.7 L807.6,465.2 L809.3,466.7 L810.9,468.3 L812.6,469.9 L814.2,471.5 L815.7,473.2 L817.3,474.8 L818.8,476.5 L820.3,478.3 L821.7,480.0 L823.2,481.8 L824.6,483.6 L825.9,485.4 L827.2,487.2 L828.5,489.1 L829.8,491.0 L831.0,492.9 L832.2,494.8 L833.4,496.8 L834.5,498.7 L835.6,500.7 L836.6,502.7 L837.6,504.7 L838.6,506.8 L839.5,508.8 L840.4,510.9 L841.2,513.0 L842.0,515.1 L842.8,517.2 L843.5,519.3 L844.3,521.5 L844.8,523.6 L845.3,525.8 L845.8,528.0 L846.3,530.2 L846.7,532.4 L847.1,534.6 L847.4,536.8 L847.7,539.0 L848.0,541.2 L848.2,543.4 L848.4,545.6 L848.5,547.8 L848.6,550.0 L848.7,552.2 L848.7,554.4 L848.7,556.6 L848.7,558.8 L848.6,561.0 L848.5,563.2 L848.3,565.4 L848.2,567.6 L848.0,569.7 L847.7,571.9 L847.5,574.1 L847.2,576.2 L846.8,578.4 L846.5,580.5 L846.1,582.6 L845.6,584.7 L845.1,586.8 L844.5,588.9 L843.9,591.0 L843.3,593.0 L842.6,595.1 L841.8,597.1 L841.1,599.1 L840.3,601.1 L839.4,603.1 L838.6,605.0 L837.7,607.0 L836.6,608.8 L835.6,610.7 L834.5,612.5 L833.3,614.3 L832.2,616.1 L831.0,617.8 L829.8,619.5 L828.5,621.2 L827.2,622.9 L826.0,624.5 L824.9,626.3 L823.9,628.1 L822.8,629.9 L821.6,631.6 L820.5,633.3 L819.3,635.0 L818.1,636.7 L816.8,638.3 L815.6,640.0 L814.3,641.6 L813.0,643.2 L811.8,644.9 L810.5,646.5 L809.1,648.1 L807.8,649.7 L806.4,651.2 L804.9,652.7 L803.5,654.2 L802.0,655.7 L800.5,657.2 L799.1,658.8 L797.7,660.3 L796.2,661.8 L794.7,663.4 L793.1,664.8 L791.6,666.3 L790.0,667.8 L788.3,669.2 L786.7,670.6 L785.0,671.9 L783.3,673.2 L781.5,674.4 L779.7,675.7 L777.9,676.9 L776.0,678.0 L774.1,679.1 L772.2,680.2 L770.3,681.3 L768.4,682.3 L766.4,683.3 L764.4,684.2 L762.4,685.0 L760.3,685.8 L758.3,686.6 L756.2,687.3 L754.1,688.0 L752.0,688.7 L749.8,689.3 L747.7,689.9 L745.6,690.5 L743.4,690.8 L741.2,691.1 L739.0,691.3 L736.8,691.5 L734.6,691.7 L732.3,691.9 L730.1,691.9 L727.9,692.0 L725.7,692.0 L723.5,692.0 L721.3,692.0 L719.1,692.0 L716.9,691.9 L714.7,691.9 L712.4,691.7 L710.2,691.5 L708.0,691.3 L705.8,691.1 L703.6,690.8 L701.4,690.5 L699.3,689.9 L697.2,689.3 L695.0,688.7 L692.9,688.0 L690.8,687.3 L688.7,686.6 L686.7,685.8 L684.6,685.0 L682.6,684.2 L680.6,683.3 L678.6,682.3 L676.7,681.3 L674.8,680.2 L672.9,679.1 L671.0,678.0 L669.1,676.9 L667.3,675.7 L665.5,674.4 L663.7,673.2 L662.0,671.9 L660.3,670.6 L658.7,669.2 L657.0,667.8 L655.4,666.3 L653.9,664.8 L652.3,663.4 L650.8,661.8 L649.3,660.3 L647.9,658.8 L646.5,657.2 L645.0,655.7 L643.5,654.2 L642.1,652.7 L640.6,651.2 L639.2,649.7 L637.9,648.1 L636.5,646.5 L635.2,644.9 L634.0,643.2 L632.7,641.6 L631.4,640.0 L630.2,638.3 L628.9,636.7 L627.7,635.0 L626.5,633.3 L625.4,631.6 L624.2,629.9 L623.1,628.1 L622.1,626.3 L621.0,624.6 L619.8,622.9 L618.5,621.2 L617.2,619.5 L616.0,617.8 L614.8,616.1 L613.7,614.3 L612.5,612.5 L611.4,610.7 L610.4,608.8 L609.3,607.0 L608.4,605.0 L607.6,603.1 L606.7,601.1 L605.9,599.1 L605.2,597.1 L604.4,595.1 L603.7,593.0 L603.1,591.0 L602.5,588.9 L601.9,586.8 L601.4,584.7 L600.9,582.6 L600.5,580.5 L600.2,578.4 L599.8,576.2 L599.5,574.1 L599.3,571.9 L599.0,569.7 L598.8,567.6 L598.7,565.4 L598.5,563.2 L598.4,561.0 L598.3,558.8 L598.3,556.6 L598.3,554.4 L598.3,552.2 L598.4,550.0 L598.5,547.8 L598.6,545.6 L598.8,543.4 L599.0,541.2 L599.3,539.0 L599.6,536.8 L599.9,534.6 L600.3,532.4 L600.7,530.2 L601.2,528.0 L601.7,525.8 L602.2,523.6 L602.7,521.5 L603.5,519.3 L604.2,517.2 L605.0,515.1 L605.8,513.0 L606.6,510.9 L607.5,508.8 L608.4,506.8 L609.4,504.7 L610.4,502.7 L611.4,500.7 L612.5,498.7 L613.6,496.8 L614.8,494.8 L616.0,492.9 L617.2,491.0 L618.5,489.1 L619.8,487.2 L621.1,485.4 L622.4,483.6 L623.8,481.8 L625.3,480.0 L626.7,478.3 L628.2,476.5 L629.7,474.8 L631.3,473.2 L632.8,471.5 L634.4,469.9 L636.1,468.3 L637.7,466.7 L639.4,465.2 L641.1,463.7 L642.9,462.2 L644.7,460.8 L646.5,459.4 L648.3,458.0 L650.1,456.6 L652.0,455.3 L653.9,454.0 L655.8,452.7 L657.8,451.5 L659.7,450.2 L661.6,449.0 L663.6,447.8 L665.5,446.6 L667.5,445.4 L669.6,444.3 L671.6,443.2 L673.7,442.1 L675.8,441.1 L677.9,440.1 L680.1,439.4 L682.3,438.6 L684.5,437.9 L686.8,437.3 L689.0,436.6 L691.3,436.1 L693.5,435.5 L695.8,435.0 L698.1,434.5 L700.4,434.1 L702.7,433.8 L705.0,433.5 L707.3,433.2 L709.6,433.0 L711.9,432.9 L714.2,432.7 L716.5,432.6 L718.9,432.6 L721.2,432.6Z" fill="none" stroke="#0000b4" stroke-width="2.2"/>
</svg>
<div class="t" style="left:468px;width:100px;text-align:right;top:31px;transform:none;font-size:12px">0</div>
<div class="t" style="left:468px;width:100px;text-align:right;top:51px;transform:none;font-size:12px">-10</div>
<div class="t" style="left:468px;width:100px;text-align:right;top:71px;transform:none;font-size:12px">-20</div>
<div class="t" style="left:468px;width:100px;text-align:right;top:91px;transform:none;font-size:12px">-30</div>
<div class="t" style="left:468px;width:100px;text-align:right;top:111px;transform:none;font-size:12px">-40</div>
<div class="t" style="left:723px;top:55px;transform:none;font-size:11.5px;font-weight:bold;color:#2020c8">Up</div>
<div class="t" style="left:798px;top:126px;transform:none;font-size:11.5px;font-weight:bold;color:#5a2ac0">Left</div>
<div class="t" style="left:846px;top:226px;transform:none;font-size:11.5px;font-weight:bold;color:#2020b8">Front</div>
<div class="t" style="left:723px;top:305px;transform:none;font-size:12px;color:#000">Re on-axis</div>
<div class="t" style="left:671px;width:100px;text-align:center;top:437px;transform:none;font-size:12px">-10</div>
<div class="t" style="left:671px;width:100px;text-align:center;top:460px;transform:none;font-size:12px">-20</div>
<div class="t" style="left:671px;width:100px;text-align:center;top:483px;transform:none;font-size:12px">-30</div>
<div class="t" style="left:671px;width:100px;text-align:center;top:506px;transform:none;font-size:12px">-40</div>
<div class="t" style="left:671px;width:100px;text-align:center;top:529px;transform:none;font-size:12px">-50</div>
<div class="t" style="left:673px;width:100px;text-align:center;top:404px;transform:none;font-size:12px">Front</div>
<div class="t" style="left:673px;width:100px;text-align:center;top:711px;transform:none;font-size:12px">Back</div>
<div class="t" style="left:553px;top:550px;transform:none;font-size:12px;color:#c41e28">Left</div>
<div class="t" style="left:553px;top:565px;transform:none;font-size:12px;color:#1c1ca8">Up</div>
<div class="t" style="left:763px;width:130px;text-align:right;top:550px;transform:none;font-size:12px;color:#c02020">Right</div>
<div class="t" style="left:763px;width:130px;text-align:right;top:565px;transform:none;font-size:12px;color:#2020a0">Down</div>
<div class="t" style="left:551px;top:711px;transform:none;font-size:12px">Re on-axis</div>
</body></html>
